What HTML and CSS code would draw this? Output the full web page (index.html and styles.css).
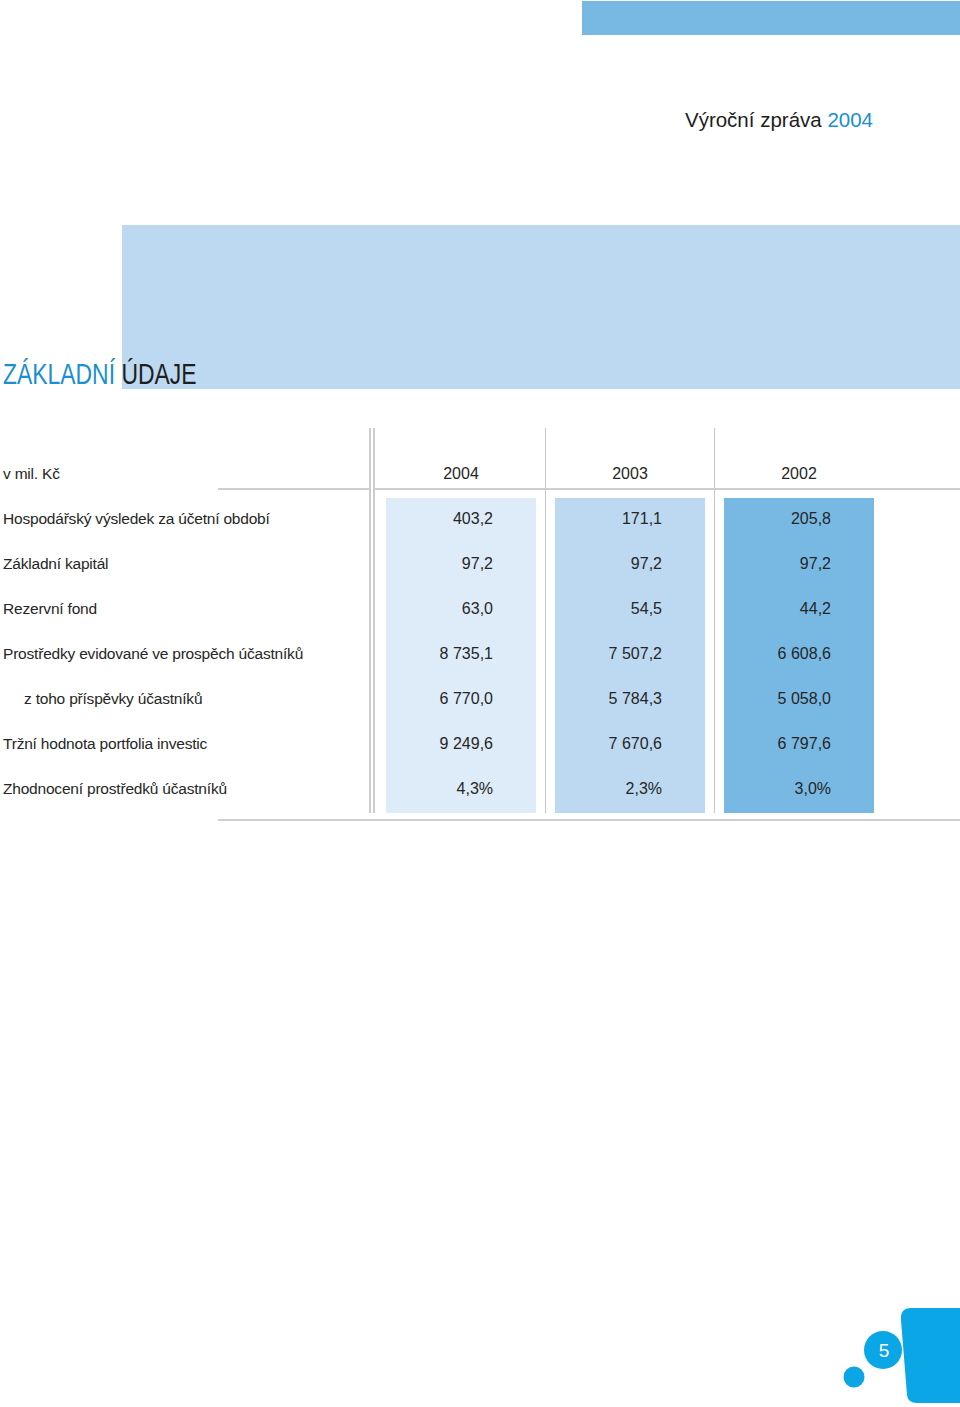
FILE: index.html
```html
<!DOCTYPE html>
<html lang="cs">
<head>
<meta charset="utf-8">
<title>Výroční zpráva 2004</title>
<link rel="stylesheet" href="styles.css">
</head>
<body>
<div class="page">
  <div class="topbar-row"><div class="topbar"></div></div>
  <div class="title">Výroční zpráva <span class="blue">2004</span></div>
  <section class="hero">
    <h1><span class="blue">ZÁKLADNÍ</span> ÚDAJE</h1>
  </section>
  <div class="table">
    <div class="col labels">
      <div class="head">v mil. Kč</div>
      <div class="body">
        <div class="cell">Hospodářský výsledek za účetní období</div>
        <div class="cell">Základní kapitál</div>
        <div class="cell">Rezervní fond</div>
        <div class="cell">Prostředky evidované ve prospěch účastníků</div>
        <div class="cell indent">z toho příspěvky účastníků</div>
        <div class="cell">Tržní hodnota portfolia investic</div>
        <div class="cell">Zhodnocení prostředků účastníků</div>
      </div>
    </div>
    <div class="col year y1">
      <div class="head"><span class="yr">2004</span></div>
      <div class="body box">
        <div class="cell">403,2</div>
        <div class="cell">97,2</div>
        <div class="cell">63,0</div>
        <div class="cell">8 735,1</div>
        <div class="cell">6 770,0</div>
        <div class="cell">9 249,6</div>
        <div class="cell">4,3%</div>
      </div>
    </div>
    <div class="col year y2">
      <div class="head"><span class="yr">2003</span></div>
      <div class="body box">
        <div class="cell">171,1</div>
        <div class="cell">97,2</div>
        <div class="cell">54,5</div>
        <div class="cell">7 507,2</div>
        <div class="cell">5 784,3</div>
        <div class="cell">7 670,6</div>
        <div class="cell">2,3%</div>
      </div>
    </div>
    <div class="col year y3">
      <div class="head"><span class="yr">2002</span></div>
      <div class="body box">
        <div class="cell">205,8</div>
        <div class="cell">97,2</div>
        <div class="cell">44,2</div>
        <div class="cell">6 608,6</div>
        <div class="cell">5 058,0</div>
        <div class="cell">6 797,6</div>
        <div class="cell">3,0%</div>
      </div>
    </div>
  </div>
  <div class="rule"></div>
  <footer class="pager">
    <svg class="pager-art" width="120" height="107" viewBox="0 0 120 107">
      <path d="M71 8 H120 V103 H77 Q68 103 67 95 L61 20 Q60 8 71 8 Z" fill="#0aa6e6"/>
      <circle cx="43" cy="50" r="19" fill="#0aa6e6"/>
      <circle cx="14" cy="77" r="10.5" fill="#0aa6e6"/>
      <text x="44" y="57" text-anchor="middle" class="pnum">5</text>
    </svg>
  </footer>
</div>
</body>
</html>
```

FILE: styles.css
```css
html, body {
  margin: 0;
  padding: 0;
  background: #ffffff;
}

body {
  font-family: "Liberation Sans", Arial, sans-serif;
  color: #262626;
}

.page {
  width: 960px;
  height: 1407px;
  display: flex;
  flex-direction: column;
  overflow: hidden;
}

.blue {
  color: #1b8fcf;
}

.topbar-row {
  display: flex;
  justify-content: flex-end;
  padding-top: 1px;
}

.topbar {
  width: 378px;
  height: 34px;
  background: #78b9e3;
}

.title {
  margin-top: 73px;
  padding-right: 87px;
  text-align: right;
  font-size: 20.5px;
  line-height: 24px;
  color: #1e1e1e;
}

.hero {
  margin-top: 93px;
  height: 164px;
  display: flex;
  align-items: flex-end;
  background: linear-gradient(#bcd9f1, #bcd9f1) no-repeat 122px 0 / calc(100% - 122px) 100%;
}

.hero h1 {
  margin: 0 0 0 3px;
  font-weight: normal;
  font-size: 29px;
  line-height: 29px;
  color: #1e1e1e;
  white-space: nowrap;
  transform: scaleX(0.79);
  transform-origin: 0 100%;
}

.table {
  margin-top: 39px;
  display: flex;
}

.col {
  display: flex;
  flex-direction: column;
}

.head {
  box-sizing: border-box;
  height: 62px;
  display: flex;
  align-items: flex-end;
  padding-bottom: 6px;
  font-size: 16px;
  line-height: 20px;
}

.body {
  margin-top: 8px;
  display: flex;
  flex-direction: column;
}

.cell {
  box-sizing: border-box;
  height: 45px;
  padding-bottom: 4px;
  display: flex;
  align-items: center;
  line-height: 20px;
}

/* label column */
.labels {
  width: 369px;
  border-right: 6px double #cdcdcd;
}

.labels .head {
  padding-left: 3px;
  font-size: 15.5px;
  letter-spacing: -0.2px;
  background: linear-gradient(#cfcfcf, #cfcfcf) no-repeat 218px 100% / calc(100% - 218px) 2px;
}

.labels .cell {
  padding-left: 3px;
  font-size: 15.5px;
  letter-spacing: -0.2px;
}

.labels .cell.indent {
  padding-left: 24px;
}

/* year columns */
.year .head {
  border-bottom: 2px solid #cfcfcf;
  justify-content: center;
  padding-bottom: 4px;
}

.box {
  width: 150px;
}

.year .cell {
  justify-content: flex-end;
  padding-right: 43px;
  font-size: 16px;
}

.y1 {
  border-right: 1px solid #c6c6c6;
}
.y1 .head {
  padding-left: 11px;
  padding-right: 9px;
}
.y1 .box {
  margin-left: 11px;
  margin-right: 9px;
  background: #deebf8;
}

.y2 {
  border-right: 1px solid #c6c6c6;
}
.y2 .head {
  padding-left: 9px;
  padding-right: 9px;
}
.y2 .box {
  margin-left: 9px;
  margin-right: 9px;
  background: #bcd9f1;
}

.y3 {
  flex: 1;
}
.y3 .head {
  justify-content: flex-start;
  padding-left: 9px;
}
.y3 .head .yr {
  width: 150px;
  text-align: center;
}
.y3 .box {
  margin-left: 9px;
  background: #78b9e3;
}

.rule {
  margin-top: 6px;
  margin-left: 218px;
  height: 2px;
  background: #cfcfcf;
}

.pager {
  margin-top: auto;
  display: flex;
  justify-content: flex-end;
}

.pager-art {
  display: block;
}

.pnum {
  fill: #ffffff;
  font-family: "Liberation Sans", Arial, sans-serif;
  font-size: 19px;
}
```
